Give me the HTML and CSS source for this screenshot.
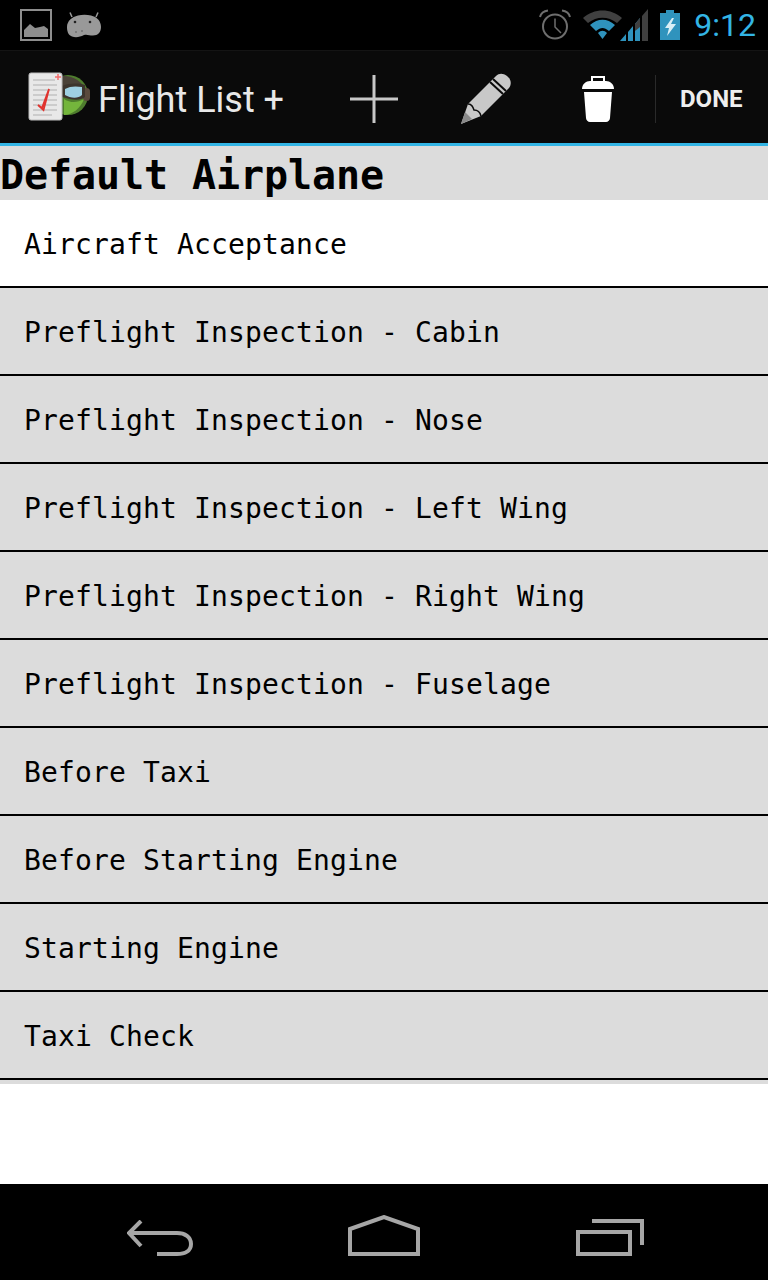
FILE: index.html
```html
<!DOCTYPE html>
<html lang="en">
<head>
  <meta charset="UTF-8" />
  <meta name="viewport" content="width=device-width, initial-scale=1.0"/>
  <title>Flight List +</title>
  <link rel="stylesheet" href="styles.css">
</head>
<body>

<div class="screen">
  <div class="status-bar">
    <div class="status-left">
      <svg class="icon-picture" viewBox="0 0 32 32" width="32" height="32">
        <rect x="1" y="1" width="30" height="30" fill="none" stroke="#8e8e8e" stroke-width="2"/>
        <path d="M4 28V21L10 15L15 19L20 18L24 17L28 20V28Z" fill="#8e8e8e"/>
      </svg>
      <svg class="icon-android" viewBox="0 0 34 26" width="34" height="26">
        <path d="M5 5L3 0.5M29 5L31 0.5" stroke="#999" stroke-width="1.500" fill="none"/>
        <path d="M11 3.500C15 2.500 20 2.500 24 3.500C30 5 34 9 34 15C34 20 31 23.500 26 23.500C22 23.500 20 22 17 23C13 25 9 26 5 24.500C1 23 0 19 0 15C0 9 5 5 11 3.500Z" fill="#999"/>
        <circle cx="8" cy="10" r="1.300" fill="#222"/>
        <circle cx="23" cy="10" r="1.300" fill="#222"/>
        <circle cx="9" cy="20" r="0.700" fill="#444"/>
        <circle cx="15" cy="19" r="0.700" fill="#444"/>
      </svg>
    </div>
    <div class="status-right">
      <svg class="icon-alarm" viewBox="0 0 32 32" width="32" height="32">
        <circle cx="16" cy="17.500" r="12" fill="none" stroke="#6e6e6e" stroke-width="2"/>
        <path d="M16 9.500V18L22 24" fill="none" stroke="#6e6e6e" stroke-width="1.500"/>
        <path d="M1 8C2 4 5 2 9 1.500M31 8C30 4 27 2 23 1.500" fill="none" stroke="#6e6e6e" stroke-width="2"/>
      </svg>
      <svg class="icon-signal" viewBox="0 0 65 32" width="65" height="32">
        <path d="M0 9C11 -1 28 -1 39 9L34 14C25 7 14 7 5 14Z" fill="#404040"/>
        <path d="M7 16C15 9 24 9 32 16L26 22C21 18 18 18 13 22Z" fill="#2f93bd"/>
        <path d="M15 24C18 21 21 21 24 24L19.500 30Z" fill="#2f93bd"/>
        <path d="M37 32L43 25V32Z" fill="#2f93bd"/>
        <path d="M45 32V23L50 17V32Z" fill="#2f93bd"/>
        <path d="M52 32V15L57 9V32Z" fill="#2f93bd"/>
        <path d="M52 15L57 9V18L52 22Z" fill="#404040"/>
        <path d="M59 32V7L65 0V32Z" fill="#404040"/>
      </svg>
      <svg class="icon-battery" viewBox="0 0 20 30" width="20" height="30">
        <path d="M6 0H14V3H20V30H0V3H6Z" fill="#2f93bd"/>
        <path d="M12 8L5 18H9L7 26L16 14H11L14 8Z" fill="#d8eef6"/>
      </svg>
      <span class="clock">9:12</span>
    </div>
  </div>

  <div class="action-bar">
    <div class="app-title">
      <svg class="app-logo" viewBox="0 0 62 50" width="62" height="50">
        <circle cx="40" cy="23" r="20" fill="#4f7d2e"/>
        <path d="M34 4C44 3 54 9 57 17L34 17Z" fill="#4a4238"/>
        <path d="M36 27C44 32 50 30 56 27C53 36 44 43 36 43Z" fill="#74b53c"/>
        <rect x="55" y="16" width="7" height="13" rx="3.500" fill="#5a4a3c"/>
        <path d="M34 14C42 11 50 11 57 13L57 25C52 29 44 28 34 25Z" fill="#3d352d"/>
        <path d="M37 17C42 14 48 14 54 15L54 23C50 27 42 26 37 23Z" fill="#9fd0e2"/>
        <rect x="1" y="1" width="33" height="47" rx="2" fill="#e8e8e8" stroke="#bdbdbd"/>
        <path d="M5 8H27M5 13H29M5 18H29M5 23H29M5 28H29M5 33H29M5 38H29M5 43H24" stroke="#b0b0b0" stroke-width="1" fill="none"/>
        <path d="M10 33L14 36L21 17L15.500 38Z" fill="none" stroke="#e0332e" stroke-width="1.800"/>
        <path d="M27 5H33M30 2V8" stroke="#f26d6d" stroke-width="1.500" fill="none"/>
      </svg>
      <span class="app-name">Flight List +</span>
    </div>
    <div class="action-btn">
      <svg viewBox="0 0 48 48" width="48" height="48">
        <path d="M0 24H48M24 0V48" stroke="#c8c8c8" stroke-width="3" stroke-linecap="round" fill="none"/>
      </svg>
    </div>
    <div class="action-btn">
      <svg viewBox="0 0 52 52" width="52" height="52">
        <path d="M1 51L8 31L36 3C39 0 43 0 47 3C51 6 52 11 49 15L21 43Z" fill="#c8c8c8"/>
        <path d="M1 51L5 39L12 46Z" fill="#8a8a8a"/>
        <path d="M8 31C12 31 13 34 14 37C18 37 20 39 21 43" stroke="#0a0a0a" stroke-width="1.500" fill="none"/>
        <path d="M30 9L43 21M33 6L46 18" stroke="#0a0a0a" stroke-width="2" fill="none"/>
      </svg>
    </div>
    <div class="action-btn">
      <svg viewBox="0 0 34 46" width="34" height="46">
        <path d="M11 5V1H23V5" stroke="#fff" stroke-width="2" fill="none"/>
        <path d="M1 13C1 8 5 5 9 5H25C29 5 33 8 33 13Z" fill="#fff"/>
        <path d="M3 16H31L29 42C29 44 27 46 25 46H9C7 46 5 44 5 42Z" fill="#fff"/>
      </svg>
    </div>
    <div class="done-btn">DONE</div>
  </div>

  <h1 class="list-title">Default Airplane</h1>

  <ul class="check-list">
    <li class="check-item selected">Aircraft Acceptance</li>
    <li class="check-item">Preflight Inspection - Cabin</li>
    <li class="check-item">Preflight Inspection - Nose</li>
    <li class="check-item">Preflight Inspection - Left Wing</li>
    <li class="check-item">Preflight Inspection - Right Wing</li>
    <li class="check-item">Preflight Inspection - Fuselage</li>
    <li class="check-item">Before Taxi</li>
    <li class="check-item">Before Starting Engine</li>
    <li class="check-item">Starting Engine</li>
    <li class="check-item">Taxi Check</li>
  </ul>

  <div class="empty-area"></div>

  <div class="nav-bar">
    <svg viewBox="0 0 66 36" width="66" height="36">
      <path d="M14 1L2 13L14 26M2 13H50C58 13 64 17 64 24C64 31 58 34 50 34H30" fill="none" stroke="#a6a6a6" stroke-width="4"/>
    </svg>
    <svg viewBox="0 0 72 41" width="72" height="41">
      <path d="M2 39V14L36 2L70 14V39Z" fill="none" stroke="#a6a6a6" stroke-width="4"/>
    </svg>
    <svg class="nav-recent" viewBox="0 0 68 37" width="68" height="37">
      <path d="M16 2H66V26" fill="none" stroke="#a6a6a6" stroke-width="4"/>
      <rect x="2" y="13" width="52" height="22" fill="none" stroke="#a6a6a6" stroke-width="4"/>
    </svg>
  </div>
</div>

</body>
</html>
```

FILE: styles.css
```css
* {
  margin: 0;
  padding: 0;
  box-sizing: border-box;
}

html, body {
  width: 768px;
  height: 1280px;
  background: #fff;
  overflow: hidden;
}

.screen {
  display: flex;
  flex-direction: column;
  height: 1280px;
}

svg {
  display: block;
  flex: none;
}

.status-bar {
  height: 51px;
  background: #000;
  border-bottom: 1px solid #141414;
  display: flex;
  align-items: center;
  justify-content: space-between;
  padding: 0 12px 0 20px;
}

.status-left {
  display: flex;
  align-items: center;
  gap: 15px;
}

.status-right {
  display: flex;
  align-items: center;
  gap: 12px;
}

.clock {
  margin-left: 2px;
  font-family: Roboto, sans-serif;
  font-size: 32px;
  color: #33b5e5;
  line-height: 1;
}

.action-bar {
  height: 95px;
  padding-top: 4px;
  background: #0a0a0a;
  border-bottom: 3px solid #33b5e5;
  display: flex;
  align-items: center;
}

.app-title {
  width: 318px;
  padding-left: 28px;
  display: flex;
  align-items: center;
  gap: 8px;
}

.app-logo {
  margin-top: -4px;
}

.app-name {
  padding-top: 2px;
  font-family: Roboto, sans-serif;
  font-size: 36px;
  color: #e8e8e8;
}

.action-btn {
  width: 112px;
  display: flex;
  justify-content: center;
}

.done-btn {
  height: 48px;
  margin-left: 1px;
  padding-left: 24px;
  border-left: 1px solid #2a2a2a;
  display: flex;
  align-items: center;
  font-family: Roboto, sans-serif;
  font-size: 24px;
  font-weight: bold;
  color: #eee;
}

.list-title {
  height: 54px;
  background: #dcdcdc;
  color: #000;
  font-family: "DejaVu Sans Mono", monospace;
  font-size: 40px;
  font-weight: bold;
  line-height: 58px;
  letter-spacing: -0.08px;
  white-space: nowrap;
}

.check-list {
  list-style: none;
  background: #dcdcdc;
  padding-bottom: 4px;
}

.check-item {
  height: 88px;
  padding-left: 24px;
  border-bottom: 2px solid #000;
  font-family: "DejaVu Sans Mono", monospace;
  font-size: 28px;
  line-height: 90px;
  letter-spacing: 0.14px;
  color: #000;
}

.check-item.selected {
  background: #fff;
}

.empty-area {
  flex: 1;
  background: #fff;
}

.nav-bar {
  height: 96px;
  background: #000;
  display: flex;
  align-items: flex-end;
  gap: 155px;
  padding: 0 0 24px 127px;
}

.nav-recent {
  margin-left: 1px;
}
```
